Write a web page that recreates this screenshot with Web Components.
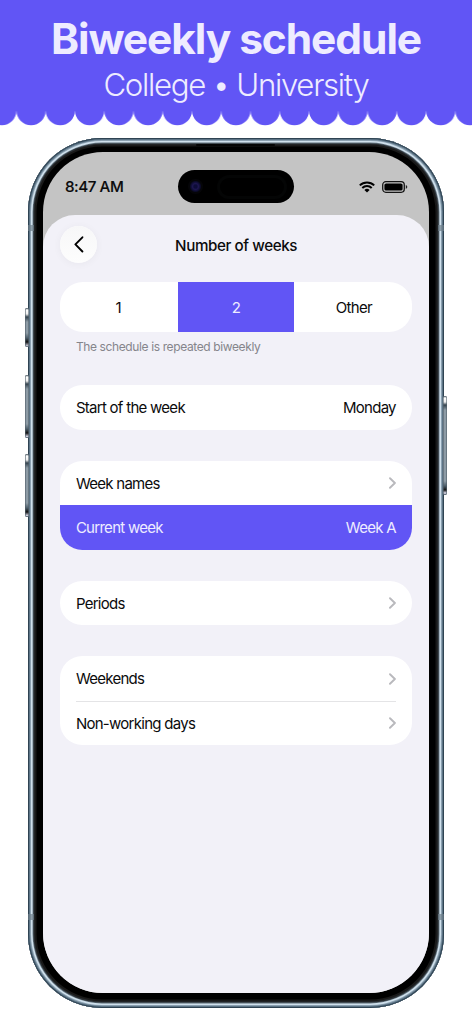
<!DOCTYPE html>
<html lang="en">
<head>
<meta charset="utf-8">
<title>Biweekly schedule</title>
<style>
  body {
    margin: 0;
    width: 472px;
    height: 1024px;
    overflow: hidden;
    background: #fff;
    font-family: Inter, "Liberation Sans", sans-serif;
    color: #0b0b0c;
    --accent: #6155f5;
    --on-accent: #eeecff;
    --sheet: #f2f1f8;
  }
</style>
</head>
<body>
<promo-banner>
  Biweekly schedule
  <span slot="subtitle">College • University</span>
</promo-banner>

<phone-frame>
  <status-bar time="8:47 AM"></status-bar>
  <settings-sheet heading="Number of weeks">
    <segment-control>
      <segment-item>1</segment-item>
      <segment-item selected>2</segment-item>
      <segment-item>Other</segment-item>
    </segment-control>
    <section-note>The schedule is repeated biweekly</section-note>
    <list-card class="first">
      <list-row value="Monday">Start of the week</list-row>
    </list-card>
    <list-card>
      <list-row link>Week names</list-row>
      <list-row value="Week A" selected>Current week</list-row>
    </list-card>
    <list-card>
      <list-row link>Periods</list-row>
    </list-card>
    <list-card>
      <list-row link>Weekends</list-row>
      <list-row link divided>Non-working days</list-row>
    </list-card>
  </settings-sheet>
</phone-frame>

<script>
  // attaches an open shadow root and fills it
  class BaseElement extends HTMLElement {
    constructor() {
      super();
      this.attachShadow({ mode: 'open' });
    }

    connectedCallback() {
      this.shadowRoot.innerHTML = this.render();
    }
  }

  class PromoBanner extends BaseElement {
    render() {
      return `
        <style>
          :host { display: block; height: 137.5px; color: var(--on-accent); text-align: center; }
          .band { height: 111px; background: var(--accent); display: flex; flex-direction: column; align-items: center; white-space: nowrap; }
          h1 { margin: 12px 0 0; font-size: 42.5px; line-height: 54px; font-weight: 700; letter-spacing: -1.1px; }
          h2 { margin: 0; font-size: 31.2px; line-height: 38px; font-weight: 300; letter-spacing: -1.3px; }
          svg { display: block; }
        </style>
        <div class="band">
          <h1><slot></slot></h1>
          <h2><slot name="subtitle"></slot></h2>
        </div>
        <svg width="472" height="15">
          <defs>
            <pattern id="scallop" x="16.45" y="0" width="29.26" height="15" patternUnits="userSpaceOnUse">
              <circle cx="14.63" cy="-0.4" r="14.6" fill="#6155f5"/>
            </pattern>
          </defs>
          <rect width="472" height="15" fill="url(#scallop)"/>
        </svg>
      `;
    }
  }

  class PhoneFrame extends BaseElement {
    render() {
      return `
        <style>
          :host { display: block; position: relative; width: 415.5px; height: 870px; margin-left: 28.3px; }
          .shell {
            box-sizing: border-box;
            height: 100%;
            padding: 14.4px;
            border-radius: 74px;
            background: #000;
            box-shadow:
              inset 0 0 0 1px #2f4352,
              inset 0 0 0 2px #5c7486,
              inset 0 0 0 3px #8ba0b0,
              inset 0 0 0 4.6px #cfe0ec,
              inset 0 0 0 5.4px #5d6c77,
              inset 0 0 0 6.6px #2a2f33,
              inset 0 0 0 8.5px #191919;
          }
          .screen {
            height: 100%;
            border-radius: 60px;
            overflow: hidden;
            background: #c4c4c4;
            display: flex;
            flex-direction: column;
          }
          /* hardware details lie over the case edge */
          .key {
            position: absolute;
            width: 4px;
            border-radius: 2px;
            background: linear-gradient(#53616b, #fff 2px, #eee 6px, #33424d 9px, #8d9ba5 14px, #8d9ba5 calc(100% - 14px), #4b5c68 calc(100% - 9px), #111 calc(100% - 5px), #dde 98%, #53616b);
            box-shadow: inset 0 0 0 .6px #53616b;
          }
          .left { left: -3.1px; }
          .right { right: -2.9px; }
          .band { position: absolute; width: 6px; height: 6px; background: #6f7f8bb0; }
          .ear { position: absolute; top: 6px; left: 168px; width: 79px; height: 2px; border-radius: 1px; background: #050505; }
        </style>
        <div class="key left" style="top: 170.5px; height: 39px"></div>
        <div class="key left" style="top: 237.5px; height: 62.5px"></div>
        <div class="key left" style="top: 316.5px; height: 62.5px"></div>
        <div class="key right" style="top: 258.5px; height: 99px"></div>
        <div class="shell"><div class="screen"><slot></slot></div></div>
        <div class="ear"></div>
        <div class="band" style="left: 0; top: 87.5px"></div>
        <div class="band" style="right: 0; top: 87.5px"></div>
        <div class="band" style="left: 0; top: 776.5px"></div>
        <div class="band" style="right: 0; top: 776.5px"></div>
      `;
    }
  }

  class StatusBar extends BaseElement {
    render() {
      return `
        <style>
          :host { display: grid; grid-template-columns: 1fr 115.5px 1fr; align-items: center; height: 63px; flex: none; box-sizing: border-box; padding-top: 7px; }
          .time { padding-left: 22.3px; font-size: 15.2px; font-weight: 500; letter-spacing: -0.45px; -webkit-text-stroke: .15px; }
          .island { height: 33px; border-radius: 17px; background: #000; display: flex; align-items: center; }
          .lens { margin-left: 9.5px; width: 15px; height: 15px; border-radius: 50%; background: radial-gradient(circle, #0d0c38 0 1.5px, #1d1650 3px, #0a0a28 5px, #050508 6px); }
          .sensor { margin-left: 14px; width: 70px; height: 24px; border-radius: 12px; box-shadow: inset 0 0 0 3px #040505; }
          .icons { display: flex; align-items: center; gap: 7px; justify-content: flex-end; padding-right: 21.8px; }
          svg { display: block; }
        </style>
        <span class="time">${this.getAttribute('time')}</span>
        <div class="island"><div class="lens"></div><div class="sensor"></div></div>
        <div class="icons">
          <svg width="16" height="12" viewBox="0 0 16 12" fill="none" stroke="#000" stroke-width="2">
            <path d="M.8 4.4a10.2 10.2 0 0 1 14.4 0"/>
            <path d="M3.3 7a6.7 6.7 0 0 1 9.4 0"/>
            <path d="M5.4 9a3.7 3.7 0 0 1 5.2 0L8 11.6z" fill="#000" stroke="none"/>
          </svg>
          <svg width="26" height="12" viewBox="0 0 26 12">
            <rect x=".7" y=".7" width="21.6" height="10.6" rx="3.2" fill="none" stroke="#151515" stroke-width="1.3"/>
            <rect x="2.4" y="2.4" width="18.2" height="7.2" rx="1.7"/>
            <path d="M23.8 4.1c2 .6 2 3.2 0 3.8z" fill="#222"/>
          </svg>
        </div>
      `;
    }
  }

  class SettingsSheet extends BaseElement {
    render() {
      return `
        <style>
          :host { display: block; flex: 1; box-sizing: border-box; padding: 0 17.2px; border-radius: 32px 32px 0 0; background: var(--sheet); }
          header { display: grid; grid-template-columns: 37px 1fr 37px; align-items: center; height: 67px; box-sizing: border-box; padding: 11.5px 0 18.5px; }
          .back { width: 37px; height: 37px; border-radius: 50%; background: linear-gradient(#f7f7f8, #fdfdfd); box-shadow: 0 1px 8px #0000000c, inset 0 0 1px #fff; display: grid; place-items: center; }
          .back svg { padding-left: 1px; }
          h3 { margin: 0; padding-top: 1px; text-align: center; font-size: 15.2px; font-weight: 500; letter-spacing: -0.42px; }
        </style>
        <header>
          <div class="back">
            <svg width="10" height="17" viewBox="0 0 10 17" fill="none" stroke="#000" stroke-width="1.9" stroke-linecap="round" stroke-linejoin="round"><path d="M8.4 1.3 1.4 8.4l7 7.1"/></svg>
          </div>
          <h3>${this.getAttribute('heading')}</h3>
        </header>
        <slot></slot>
      `;
    }
  }

  class SegmentControl extends BaseElement {
    render() {
      return `
        <style>
          :host { display: grid; grid-template-columns: 1fr 1fr 1fr; gap: 1px; height: 49.8px; border-radius: 23px; overflow: hidden; background: #fff; }
        </style>
        <slot></slot>
      `;
    }
  }

  class SegmentItem extends BaseElement {
    render() {
      return `
        <style>
          :host { display: grid; place-items: center; padding-top: 1px; font-size: 15px; letter-spacing: -0.7px; }
          :host([selected]) { background: var(--accent); color: var(--on-accent); margin-top: 0; }
        </style>
        <slot></slot>
      `;
    }
  }

  class SectionNote extends BaseElement {
    render() {
      return `
        <style>
          :host { display: block; height: 22.5px; padding: 7px 16px 0; font-size: 12px; line-height: 16px; letter-spacing: -0.38px; color: #85858b; }
        </style>
        <slot></slot>
      `;
    }
  }

  class ListCard extends BaseElement {
    render() {
      return `
        <style>
          :host { display: block; margin-top: 31px; border-radius: 22.3px; overflow: hidden; background: #fff; }
          :host(.first) { margin-top: 24px; }
        </style>
        <slot></slot>
      `;
    }
  }

  class ListRow extends BaseElement {
    render() {
      const value = this.getAttribute('value');
      const end = value
        ? `<span>${value}</span>`
        : `<svg width="7" height="12" viewBox="0 0 7 12" fill="none" stroke="#b9b9bd" stroke-width="1.9" stroke-linecap="round" stroke-linejoin="round"><path d="M1 1.2 5.9 6 1 10.8"/></svg>`;
      return `
        <style>
          :host { display: block; padding: 0 16px; font-size: 15px; letter-spacing: -0.72px; }
          :host([selected]) { background: var(--accent); color: var(--on-accent); }
          .row { display: flex; align-items: center; justify-content: space-between; height: 44.5px; box-sizing: border-box; padding-top: 1px; }
          :host([divided]) .row { box-shadow: inset 0 1px #e4e4e6; }
          span { margin-right: .4px; }
        </style>
        <div class="row"><slot></slot>${end}</div>
      `;
    }
  }

  customElements.define('promo-banner', PromoBanner);
  customElements.define('phone-frame', PhoneFrame);
  customElements.define('status-bar', StatusBar);
  customElements.define('settings-sheet', SettingsSheet);
  customElements.define('segment-control', SegmentControl);
  customElements.define('segment-item', SegmentItem);
  customElements.define('section-note', SectionNote);
  customElements.define('list-card', ListCard);
  customElements.define('list-row', ListRow);
</script>
</body>
</html>
